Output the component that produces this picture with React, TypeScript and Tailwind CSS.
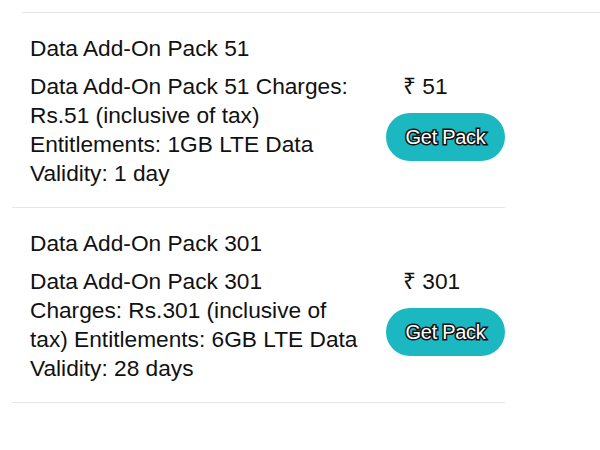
import React from 'react';

interface Pack {
  id: number;
  title: string;
  description: string;
  price: string;
}

const packs: Pack[] = [
  {
    id: 51,
    title: 'Data Add-On Pack 51',
    description: 'Data Add-On Pack 51 Charges: Rs.51 (inclusive of tax) Entitlements: 1GB LTE Data Validity: 1 day',
    price: '₹ 51',
  },
  {
    id: 301,
    title: 'Data Add-On Pack 301',
    description: 'Data Add-On Pack 301 Charges: Rs.301 (inclusive of tax) Entitlements: 6GB LTE Data Validity: 28 days',
    price: '₹ 301',
  },
];

const PackRow: React.FC<{ pack: Pack }> = ({ pack }) => (
  <div className="mx-[12px] w-[493px] border-b border-[#e6e6e6] pl-[18px] pt-[21px] pb-[19px]">
    <div className="leading-[29px]">{pack.title}</div>
    <div className="mt-[9px] flex">
      <p className="w-[328px] leading-[29px]">{pack.description}</p>
      <div className="ml-auto flex w-[119px] flex-col">
        <span className="pl-[17px] leading-[29px]">{pack.price}</span>
        <button className="mt-[12px] h-[48px] w-[119px] rounded-full bg-[#1bb8c1] text-[20px] tracking-[-0.3px] text-white [-webkit-text-stroke:3px_#111] [paint-order:stroke_fill]">
          Get Pack
        </button>
      </div>
    </div>
  </div>
);

const App: React.FC = () => {
  return (
    <div className="h-[450px] w-[600px] bg-white pt-[12px] text-[22.7px] text-[#111] font-['Liberation_Sans',Arial,sans-serif]">
      <div className="ml-[22px] border-t border-[#e6e6e6]" />
      {packs.map(pack => (
        <PackRow key={pack.id} pack={pack} />
      ))}
    </div>
  );
};

export default App;
